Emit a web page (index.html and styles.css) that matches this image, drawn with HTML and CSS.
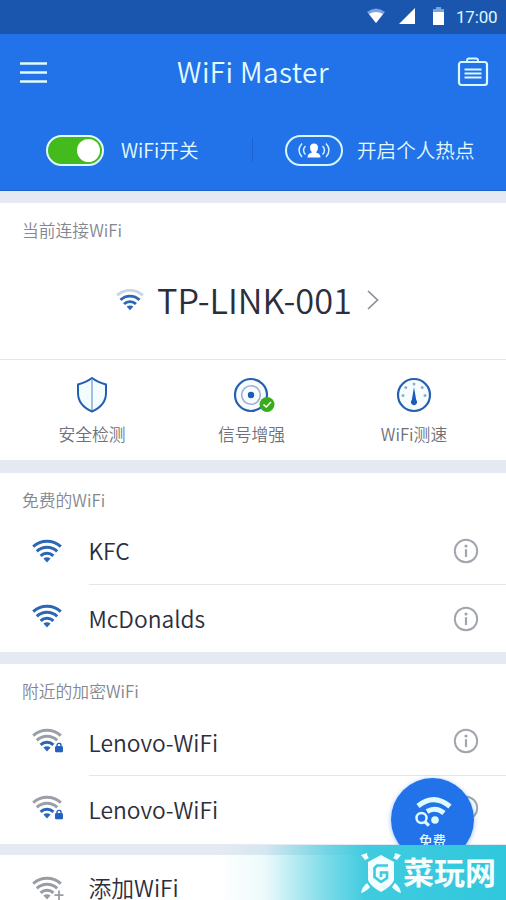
FILE: index.html
```html
<!DOCTYPE html>
<html lang="zh-CN">
<head>
<meta charset="utf-8">
<title>WiFi Master</title>
<link rel="stylesheet" href="styles.css">
</head>
<body>
<svg class="defs" aria-hidden="true">
  <symbol id="wifi" viewBox="0 0 30 24">
    <g fill="none" stroke-width="3">
      <path class="a1" d="M1.2 7.6A20.3 20.3 0 0 1 28.8 7.6"/>
      <path class="a2" d="M4.8 12.4A14.7 14.7 0 0 1 25.2 12.4"/>
      <path class="a3" d="M8.6 16.9A9.1 9.1 0 0 1 21.4 16.9"/>
    </g>
    <path class="a4" d="M11.4 19.6Q15 17 18.600 19.6L15 23.4Z"/>
  </symbol>
  <symbol id="info" viewBox="0 0 26 26">
    <circle cx="13" cy="13" r="11.2" fill="none" stroke="#a2a5ad" stroke-width="2"/>
    <circle cx="13" cy="8" r="1.6" fill="#a2a5ad"/>
    <path d="M13 11.2V19" stroke="#a2a5ad" stroke-width="2.2"/>
  </symbol>
  <symbol id="lock" viewBox="0 0 8 10">
    <path d="M2 5V2.8a2 2 0 0 1 4 0V5" fill="none" stroke="#2460c4" stroke-width="1.4"/>
    <rect x="0.5" y="4" width="7" height="5.6" rx=".5" fill="#2460c4"/>
  </symbol>
</svg>
<main class="phone">
  <div class="status">
    <svg width="18" height="18" viewBox="0 0 18 18"><path d="M0 5Q9-2 18 5L9 16Z" fill="#7ca3df"/><path d="M2 7Q9 3 16 7L9 16Z" fill="#fff"/></svg>
    <svg class="cell" width="16" height="16" viewBox="0 0 16 16"><path d="M16 0V16H0Z" fill="#fff"/></svg>
    <svg class="battery" width="11" height="18" viewBox="0 0 11 18"><path d="M3 0H8V2H11V6H0V2H3Z" fill="#7ca3df"/><path d="M0 5H11V18H0Z" fill="#fff"/></svg>
    <span class="time">17:00</span>
  </div>
  <header class="header">
    <div class="titlebar">
      <svg width="28" height="22" viewBox="0 0 28 22"><path d="M0 2.500H27M0 11.500H27M0 20.500H27" stroke="#e4fbff" stroke-width="2.6"/></svg>
      <h1>WiFi Master</h1>
      <svg width="30" height="30" viewBox="0 0 30 30" fill="none" stroke="#d9f8ff" stroke-width="2.2"><rect x="1" y="5" width="28" height="23" rx="2.5"/><path d="M9 5V3.5Q9 1.5 11 1.5H18Q20 1.5 20 3.5V5M6.5 12.5H23.5M6.5 16.5H23.5M6.5 20.5H23.5" stroke-width="1.9"/></svg>
    </div>
    <div class="switches">
      <div class="switch"><span class="toggle"><i></i></span><span>WiFi开关</span></div>
      <div class="switch hotspot">
        <svg width="58" height="31" viewBox="0 0 58 31"><rect x="1" y="1" width="56" height="29" rx="14.5" fill="none" stroke="#d6f7ff" stroke-width="2"/><path d="M22.5 22.5Q22.5 18.5 27 17.5Q24.8 15.5 25 12Q25.4 8.5 29 8.5Q32.6 8.5 33 12Q33.2 15.5 31 17.5Q35.5 18.5 35.5 22.5Z" fill="#fff"/><g fill="none" stroke="#d6f7ff" stroke-width="1.4"><path d="M17 8.500Q11 15.200 17 22M20.500 11Q16.500 15.200 20.500 19.500M41 8.500Q47 15.200 41 22M37.500 11Q41.500 15.200 37.500 19.500"/></g></svg>
        <span>开启个人热点</span>
      </div>
    </div>
  </header>

  <section class="card current">
    <h2>当前连接WiFi</h2>
    <div class="network">
      <svg class="wifi weak" width="28" height="23"><use href="#wifi"/></svg>
      <strong>TP-LINK-001</strong>
      <svg class="arrow" width="12" height="20" viewBox="0 0 12 20"><path d="M1 1L10.500 10L1 19" fill="none" stroke="#8b8e96" stroke-width="1.700"/></svg>
    </div>
    <div class="tools">
      <div class="tool">
        <svg width="40" height="36" viewBox="0 0 40 36"><path d="M20 1C16 4 11 6 6 7.500V16C6 25 12 31 20 34.500C28 31 34 25 34 16V7.500C29 6 24 4 20 1Z" fill="#f3fcff" stroke="#245fb2" stroke-width="2"/><path d="M20 3V33" stroke="#8ba8dc" stroke-width="1.500"/></svg>
        <span>安全检测</span>
      </div>
      <div class="tool">
        <svg width="42" height="36" viewBox="0 0 42 36"><circle cx="20" cy="18" r="16" fill="#f7fdff" stroke="#245fb2" stroke-width="2.200"/><circle cx="20" cy="18" r="9.300" fill="none" stroke="#a6aed2" stroke-width="1.600"/><circle cx="20" cy="18" r="3.200" fill="#1c5cb8"/><circle cx="36" cy="27.500" r="7.500" fill="#37ad1c"/><path d="M32.500 27.500L35.200 30L40 25" fill="none" stroke="#fff" stroke-width="1.500"/></svg>
        <span>信号增强</span>
      </div>
      <div class="tool">
        <svg width="40" height="36" viewBox="0 0 40 36"><circle cx="20" cy="18" r="16" fill="#f7fdff" stroke="#245fb2" stroke-width="2.200"/><path d="M20 10L22.200 23A3 3 0 1 1 17.800 23Z" fill="#1c5cb8"/><g fill="#8faed5"><circle cx="20" cy="7" r="1.500"/><circle cx="11.800" cy="10.500" r="1.500"/><circle cx="28.200" cy="10.500" r="1.500"/><circle cx="9" cy="18.500" r="1.500"/><circle cx="31" cy="18.500" r="1.500"/></g></svg>
        <span>WiFi测速</span>
      </div>
    </div>
  </section>

  <section class="card free">
    <h2>免费的WiFi</h2>
    <div class="row"><svg class="wifi" width="30" height="24"><use href="#wifi"/></svg><div class="body"><span>KFC</span><svg width="26" height="26"><use href="#info"/></svg></div></div>
    <div class="row"><svg class="wifi" width="30" height="24"><use href="#wifi"/></svg><div class="body"><span>McDonalds</span><svg width="26" height="26"><use href="#info"/></svg></div></div>
  </section>

  <section class="card locked">
    <h2>附近的加密WiFi</h2>
    <div class="row"><svg class="wifi far" width="30" height="24"><use href="#wifi"/><use href="#lock" x="23" y="14.500" width="8" height="10"/></svg><div class="body"><span>Lenovo-WiFi</span><svg width="26" height="26"><use href="#info"/></svg></div></div>
    <div class="row"><svg class="wifi far" width="30" height="24"><use href="#wifi"/><use href="#lock" x="23" y="14.500" width="8" height="10"/></svg><div class="body"><span>Lenovo-WiFi</span><svg width="26" height="26"><use href="#info"/></svg></div></div>
  </section>

  <section class="card add">
    <div class="row"><svg class="wifi off" width="30" height="24"><use href="#wifi"/><path d="M26.500 14.500V23.500M22 19H31" stroke="#fff" stroke-width="4"/><path d="M27 14.500V24M22.500 19.200H31.500" stroke="#999ca5" stroke-width="1.800"/></svg><div class="body"><span>添加WiFi</span></div></div>
  </section>

  <div class="fab">
    <svg width="40" height="30" viewBox="0 0 40 30" fill="none" stroke="#defaff"><path d="M5 9Q21-4 37 9.500" stroke-width="5"/><path d="M14 14.500Q22.500 9.500 31 16" stroke-width="5"/><circle cx="22" cy="23" r="3.800" fill="#defaff" stroke="none"/><circle cx="8.500" cy="21" r="5" stroke-width="2.500"/><path d="M12 25L16 28.500" stroke-width="3"/></svg>
    <span>免费</span>
  </div>
  <div class="watermark">
    <svg width="40" height="42" viewBox="0 0 40 42"><g fill="#f2feff"><path d="M0 3L6 1L6.500 4L8 6L4 8ZM40 3L34 1L33.500 4L32 6L36 8ZM0 41Q1 35 6 31L9 35Q6 39 0 41ZM40 41Q39 35 34 31L31 35Q34 39 40 41Z"/><path d="M20 3L33 10V28Q31 34 20 40Q9 34 7 28V10Z"/></g><path d="M27 13.500H16L13.500 16V25L20 30L26 26V20.500H20V25" fill="none" stroke="#3fc9df" stroke-width="2.600"/></svg>
    <b>菜玩网</b>
  </div>
</main>
</body>
</html>
```
FILE: styles.css
```css
* { box-sizing: border-box; }
body {
  margin: 0;
  background: #e5eaf2;
  font-family: "Noto Sans CJK SC", "Noto Sans", sans-serif;
  font-weight: 350;
  color: #2b2e3c;
}
.defs { position: absolute; width: 0; height: 0; }
svg { display: block; flex: none; overflow: visible; }
.phone { position: relative; width: 506px; height: 900px; overflow: hidden; white-space: nowrap; }

.status {
  height: 34px;
  padding: 0 9px 2px 0;
  background: #1b56ae;
  display: flex;
  align-items: center;
  justify-content: flex-end;
}
.cell { margin-left: 14px; }
.battery { margin-left: 18px; }
.time { width: 41px; margin-left: 12px; font: 400 17px/32px Roboto, sans-serif; color: #dff6ff; letter-spacing: -0.2px; padding-top: 1px; }

.header { height: 157px; background: #2272ea; border-bottom: 1px solid #1c60c9; color: #e4fbff; }
.titlebar { height: 76px; padding: 0 18px 0 20px; display: flex; align-items: center; justify-content: space-between; }
.titlebar h1 { margin: 0 0 2px; font-size: 28px; font-weight: 350; letter-spacing: .4px; line-height: 40px; }
.switches { height: 80px; display: flex; align-items: center; font-size: 19.6px; }
.switch { height: 24px; display: flex; align-items: center; }
.switch:first-child { width: 253px; padding-left: 46px; gap: 17px; border-right: 1px solid #1d62cf; }
.hotspot { padding-left: 32px; gap: 14px; }
.switch > span:last-child { margin-bottom: 2px; }
.toggle { width: 58px; height: 31px; padding: 3px 2px; border: 2px solid #e0fbff; border-radius: 16px; background: #43bb1c; display: flex; justify-content: flex-end; align-items: center; }
.toggle i { width: 23px; height: 23px; border-radius: 50%; background: #fff; }

.card { background: #fff; }
.card h2 { margin: 0; padding-left: 22px; font-size: 16.8px; font-weight: 350; color: #84878f; line-height: 24px; }
.current { height: 257px; margin-top: 12px; padding-top: 15px; }
.network { height: 118px; padding: 0 0 3px 116px; display: flex; align-items: center; border-bottom: 1px solid #e5e6ea; }
.network strong { margin: 0 0 1px 13px; font-size: 34.4px; font-weight: 350; line-height: 50px; }
.arrow { margin: 2px 0 0 15px; }
.tools { display: grid; grid-template-columns: 184px 135px 1fr; padding-top: 17px; }
.tool { display: flex; flex-direction: column; align-items: center; gap: 9px; font-size: 16.8px; line-height: 24px; color: #6e7179; }
.tool:last-child { padding-left: 3px; }

.free { height: 179px; margin-top: 13px; padding-top: 15px; }
.locked { height: 180px; margin-top: 12px; padding-top: 15px; }
.locked h2, .free h2 { margin-bottom: 6px; }
.row { height: 67px; padding-left: 32px; display: flex; align-items: center; }
.row .wifi { margin-bottom: 1px; }
.body { height: 67px; flex: 1; margin-left: 26.5px; padding-right: 27px; display: flex; align-items: center; justify-content: space-between; font-size: 22.8px; font-weight: 350; }
.row:nth-child(2) .body { border-bottom: 1px solid #e3e5e8; }
.locked .row .wifi { margin-bottom: 5px; }
.locked .body svg { margin-bottom: 3px; }
.free .row:nth-child(3) .wifi { margin-bottom: 5px; }
.free .body span { margin-bottom: 1px; }
.add { height: 67px; margin-top: 11px; }
.add .row .wifi { margin-bottom: 2px; }
.add .body { padding-bottom: 2px; }

.wifi { stroke: #2b67b7; fill: #2b67b7; }
.weak { --outer: #cbd5e3; }
.far { --outer: #9a9fa8; --middle: #9a9fa8; }
.off { stroke: #999ca5; fill: #999ca5; }
.a1 { stroke: var(--outer, inherit); }
.a2 { stroke: var(--middle, inherit); }
.a4 { stroke: none; }

.fab { position: absolute; left: 391px; top: 778px; width: 83px; height: 83px; padding: 19px 0 0 0; border-radius: 50%; background: #2272ea; box-shadow: 0 1px 5px #2272ea70; display: flex; flex-direction: column; align-items: center; font-size: 13.5px; font-weight: 500; line-height: 20px; color: #defaff; gap: 3px; }
.watermark { position: absolute; left: 180px; bottom: 0; width: 326px; height: 55px; padding: 0 10px 0 0; display: flex; align-items: center; justify-content: flex-end; gap: 2px; background: linear-gradient(90deg, #40cbdf00 12%, #40cbdf18 26%, #40cbdf70 37%, #40cbdfb0 45%, #40cbdf 57%, #30c7dd); }
.watermark b { margin-bottom: 4px; font-size: 31px; font-weight: 700; color: #f6feff; line-height: 50px; }
```
